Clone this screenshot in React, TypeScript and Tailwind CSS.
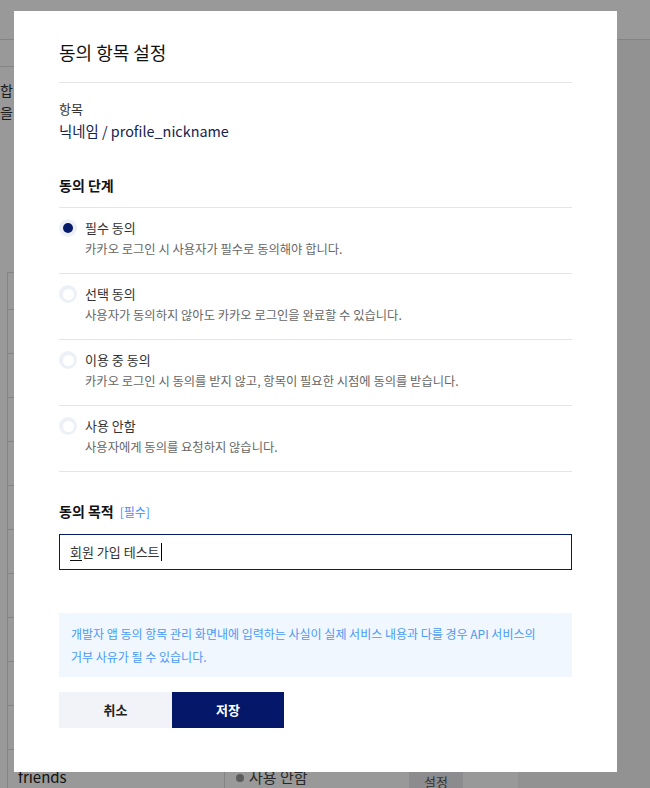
import React from 'react'

const levels = [
    { title: '필수 동의', desc: '카카오 로그인 시 사용자가 필수로 동의해야 합니다.' },
    { title: '선택 동의', desc: '사용자가 동의하지 않아도 카카오 로그인을 완료할 수 있습니다.' },
    { title: '이용 중 동의', desc: '카카오 로그인 시 동의를 받지 않고, 항목이 필요한 시점에 동의를 받습니다.' },
    { title: '사용 안함', desc: '사용자에게 동의를 요청하지 않습니다.' },
]

function Radio({ checked }: { checked: boolean }) {
    return (
        <span className="flex items-center justify-center w-[18px] h-[18px] rounded-full bg-[#eef0f7] shrink-0">
            <span className={checked ? 'w-[10px] h-[10px] rounded-full bg-[#061a6c]' : 'w-[11px] h-[11px] rounded-full bg-white'} />
        </span>
    )
}

function BackgroundPage() {
    const rows = Array.from({ length: 10 })
    return (
        <div className="flex flex-col w-full h-full bg-[#f4f4f4]">
            <div className="h-10 shrink-0 bg-white border-b border-[#dcdcdc]" />
            <div className="flex flex-row flex-1">
                <div className="w-[518px] bg-white flex flex-col">
                    <div className="h-[27px] border-b border-[#dcdcdc]" />
                    <div className="mt-[12px] text-[14px] leading-[22px] text-[#333]">
                        <p>합니다</p>
                        <p>을</p>
                    </div>
                    <div className="mt-[149px] ml-[7px] border-l border-[#dcdcdc] flex flex-col">
                        <div className="h-[37px] border-t border-[#dcdcdc]" />
                        {rows.map((_, i) => (
                            <div key={i} className="h-[44px] border-t border-[#dcdcdc]" />
                        ))}
                        <div className="h-[44px] border-t border-[#dcdcdc] flex flex-row">
                            <div className="w-[216px] pl-[10px] pt-[16px] text-[15px] text-[#222]">friends</div>
                            <div className="w-[185px] border-l border-[#dcdcdc] pl-[11px] pt-[16px] flex flex-row items-start gap-[5px] text-[15px] text-[#444]">
                                <span className="mt-[8px] w-[8px] h-[8px] rounded-full bg-[#999]" />
                                사용 안함
                            </div>
                            <div className="pt-[16px]">
                                <div className="w-[54px] h-[30px] bg-[#e9e9ee] text-[13px] text-[#555] flex justify-center pt-[6px]">설정</div>
                            </div>
                        </div>
                    </div>
                </div>
            </div>
        </div>
    )
}

function App() {
    return (
        <div className="relative w-[650px] h-[788px] overflow-hidden" style={{ fontFamily: '"Noto Sans CJK KR", "Noto Sans", sans-serif' }}>
            <BackgroundPage />
            <div className="absolute inset-0 bg-black/40">
                <div className="ml-[14px] mt-[11px] w-[603px] h-[761px] bg-white px-[45px] flex flex-col">
                    <div className="pt-[28px] pb-[17px] border-b border-[#e5e5e5]">
                        <h2 className="text-[18px] leading-[26px] text-[#111]">동의 항목 설정</h2>
                    </div>

                    <div className="mt-[16px] text-[13px] leading-[20px] text-[#333]">항목</div>
                    <div className="mt-[1px] text-[14.4px] leading-[22px] text-[#15224f]">닉네임 / profile_nickname</div>

                    <div className="mt-[33px] pb-[12px] border-b border-[#e5e5e5] text-[14px] leading-[20px] font-bold text-[#111]">동의 단계</div>
                    {levels.map((l, i) => (
                        <div key={l.title} className="flex flex-row gap-[8px] pt-[10px] pb-[15px] border-b border-[#e5e5e5]">
                            <div className="pt-[1px]">
                                <Radio checked={i === 0} />
                            </div>
                            <div className="flex flex-col">
                                <span className="text-[13px] leading-[20px] text-[#333]">{l.title}</span>
                                <span className="mt-[2px] text-[12.3px] leading-[18px] text-[#666]">{l.desc}</span>
                            </div>
                        </div>
                    ))}

                    <div className="mt-[29px] flex flex-row items-baseline gap-[6px]">
                        <span className="text-[14px] leading-[20px] font-bold text-[#111]">동의 목적</span>
                        <span className="text-[12px] text-[#3e8ef7]">[필수]</span>
                    </div>
                    <div className="mt-[13px] h-[36px] border border-[#061a6c] pl-[10px] flex flex-row items-center text-[13px] text-[#333]">
                        <span className="border-b border-[#111] leading-[16px]">회</span>
                        <span>원 가입 테스트</span>
                        <span className="ml-[1px] w-[1px] h-[18px] bg-black" />
                    </div>

                    <div className="mt-[43px] h-[64px] bg-[#f0f7ff] px-[12px] pt-[9px] text-[12px] leading-[23px] text-[#4a9af5] break-keep">
                        개발자 앱 동의 항목 관리 화면내에 입력하는 사실이 실제 서비스 내용과 다를 경우 API 서비스의 거부 사유가 될 수 있습니다.
                    </div>

                    <div className="mt-[15px] flex flex-row">
                        <button className="w-[113px] h-[36px] bg-[#f2f3f8] text-[13px] font-bold text-[#222]">취소</button>
                        <button className="w-[112px] h-[36px] bg-[#041768] text-[13px] font-bold text-white">저장</button>
                    </div>
                </div>
            </div>
        </div>
    )
}

export default App
